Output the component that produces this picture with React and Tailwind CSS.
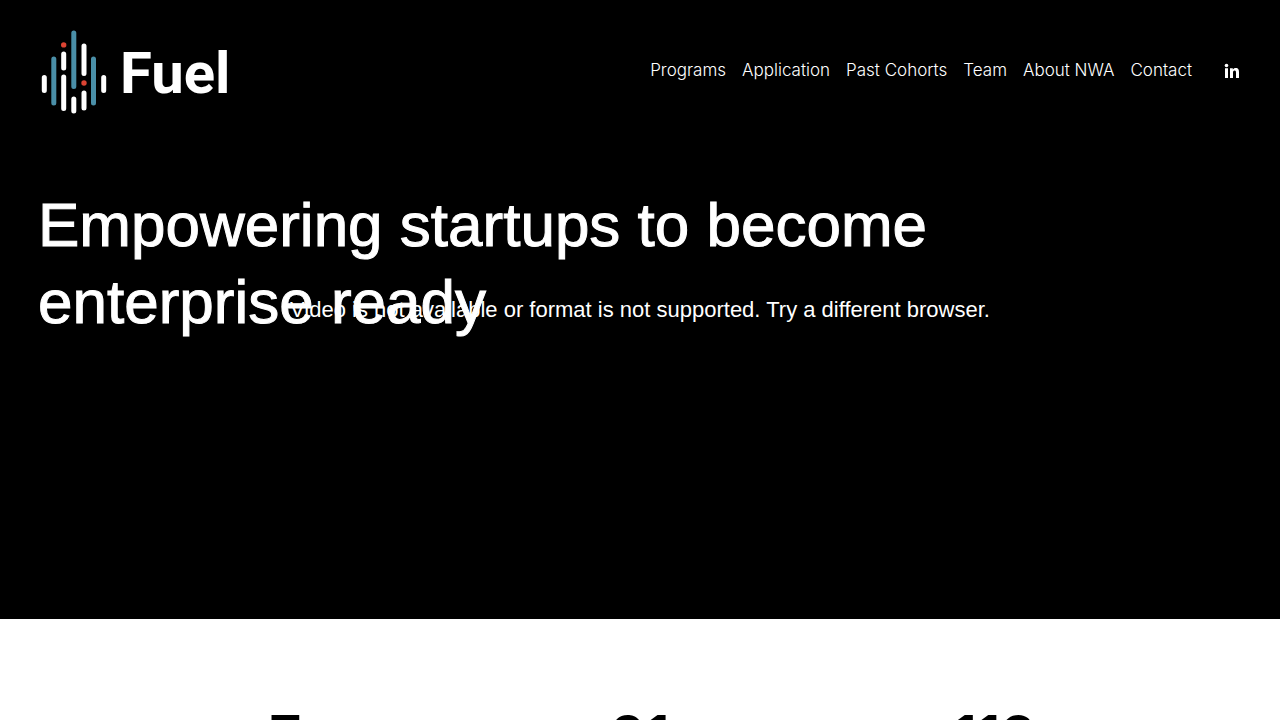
import React from "react";

const links = ["Programs", "Application", "Past Cohorts", "Team", "About NWA", "Contact"];
const stats = ["7", "91", "113"];

function Logo() {
  return (
    <svg viewBox="0 0 200 90" className="h-[90px] w-[200px]" role="img" aria-label="Fuel">
      <g strokeWidth="5" strokeLinecap="round">
        <g stroke="#fff">
          <path d="M6.300 50.500V63.500M25.700 27V41M25.700 50V81.500M35.800 72V84M46 19V46.500M46 66V81M65.700 50.500V63.500" />
        </g>
        <path stroke="#4a8fa8" d="M15.800 32V76M35.800 6V59.500M55.500 32V76" />
      </g>
      <circle cx="25.700" cy="17.900" r="2.700" fill="#dc4433" />
      <circle cx="46" cy="56" r="2.700" fill="#dc4433" />
      <text x="82" y="65.500" fill="#fff" fontFamily="Roboto, sans-serif" fontWeight="700" fontSize="58">Fuel</text>
    </svg>
  );
}

export default function App() {
  return (
    <div className="h-screen overflow-hidden bg-white font-['Liberation_Sans',Arial,sans-serif]">
      <div className="relative bg-black pb-[279px] text-white">
        <header className="flex items-center justify-between px-[38px] pt-[27px]">
          <a href="#home"><Logo /></a>
          <nav className="mb-[3px] mr-0.5 flex items-center gap-4 font-['Inter',sans-serif] text-[17px] font-light">
            {links.map((l) => (
              <a key={l} href="#page">{l}</a>
            ))}
            <a href="#linkedin" aria-label="LinkedIn" className="ml-4">
              <svg viewBox="0 0 16 16" className="size-4" fill="#fff">
                <circle cx="2.500" cy="2.500" r="1.800" />
                <path d="M1 5.300h3V15H1zM6 5.300h2.800v1.300C9.400 5.600 10.400 5 11.700 5c2.800 0 3.300 1.900 3.300 4.300V15h-3v-5.100c0-1.200 0-2.400-1.400-2.400S9 8.600 9 9.800V15H6z" />
              </svg>
            </a>
          </nav>
        </header>
        <p className="absolute inset-x-0 top-[296px] text-center text-[22px] leading-7">
          Video is not available or format is not supported. Try a different browser.
        </p>
        <h1 className="relative mt-[69px] max-w-[1000px] px-[38px] text-[62px] leading-[77px] [-webkit-text-stroke:1px_white]">
          Empowering startups to become enterprise ready
        </h1>
      </div>
      <main className="grid grid-cols-3 px-[108px] pt-[79px] text-center font-['Inter',sans-serif] text-[56px] font-semibold leading-[77px] text-black">
        {stats.map((s) => (
          <p key={s}>{s}</p>
        ))}
      </main>
    </div>
  );
}
